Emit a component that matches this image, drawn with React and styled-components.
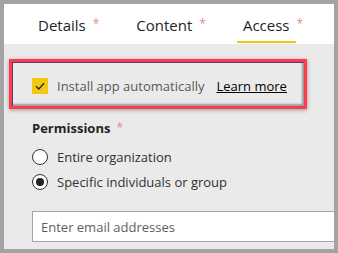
import React from "react";
import styled, { createGlobalStyle } from "styled-components";

const Global = createGlobalStyle`
  html, body { margin: 0; padding: 0; background: #a3a3a3; }
  * { box-sizing: border-box; }
`;

const Frame = styled.div`
  width: 338px;
  height: 253px;
  border: 4px solid #a3a3a3;
  background: #eaeaea;
  overflow: hidden;
  display: flex;
  flex-direction: column;
  font-family: "Open Sans", "Noto Sans", sans-serif;
  color: #323130;
  white-space: nowrap;
`;

const Header = styled.div`
  flex: none;
  height: 40px;
  background: #fff;
  display: flex;
  align-items: flex-end;
  gap: 31px;
  padding: 0 0 1px 28px;
`;

const Tab = styled.div`
  display: flex;
  align-items: center;
  height: 39px;
`;

const TabLabel = styled.span`
  height: 39px;
  display: flex;
  align-items: center;
  padding: 4px 6px 0;
  font-size: 15px;
  color: #252423;
  border-bottom: 2px solid ${(p) => (p.$active ? "#f2c811" : "transparent")};
`;

const Required = styled.span`
  color: #ee7f95;
  font-size: ${(p) => p.$size || 12}px;
  font-weight: 400;
  margin-left: ${(p) => p.$gap || 1}px;
  align-self: center;
  margin-top: ${(p) => p.$top || 0}px;
`;

const Body = styled.div`
  flex: 1;
  padding: 15px 0 0 5px;
  display: flex;
  flex-direction: column;
`;

const Highlight = styled.div`
  width: 298px;
  height: 50px;
  flex: none;
  border: 3px solid #fd3b4c;
  box-shadow: inset 1px 1px 0 #5a3d74, inset -2px -2px 2px rgba(0, 0, 0, 0.35),
    0 1px 4px rgba(0, 0, 0, 0.35);
  display: flex;
  align-items: center;
  padding: 3px 0 0 20px;
  gap: 9px;
  font-size: 13px;
`;

const CheckBox = styled.span`
  width: 16px;
  height: 16px;
  background: #f2c811;
  display: flex;
  align-items: center;
  justify-content: center;
  flex: none;
`;

const MutedText = styled.span`
  color: #5a5856;
`;

const Link = styled.a`
  margin-left: 3px;
  color: #000;
  text-decoration: underline;
`;

const Section = styled.div`
  padding-left: 23px;
  display: flex;
  flex-direction: column;
`;

const Label = styled.div`
  margin-top: 10px;
  font-size: 13px;
  font-weight: 700;
  color: #252423;
  display: flex;
  align-items: center;
`;

const RadioList = styled.div`
  margin-top: 12px;
  display: flex;
  flex-direction: column;
  gap: 9px;
`;

const RadioRow = styled.div`
  display: flex;
  align-items: center;
  gap: 9px;
  font-size: 13px;
  height: 16px;
`;

const Radio = styled.span`
  width: 16px;
  height: 16px;
  flex: none;
  border-radius: 50%;
  border: 1px solid #323130;
  background: #fff;
  display: flex;
  align-items: center;
  justify-content: center;
  &::after {
    content: "";
    width: 8px;
    height: 8px;
    border-radius: 50%;
    background: ${(p) => (p.$checked ? "#252423" : "transparent")};
  }
`;

const Input = styled.div`
  margin-top: 21px;
  width: 320px;
  height: 31px;
  flex: none;
  background: #fff;
  border: 1px solid #a6a6a6;
  display: flex;
  align-items: center;
  padding-left: 8px;
  font-size: 13px;
  color: #605e5c;
`;

export default function App() {
  return (
    <>
      <Global />
      <Frame>
        <Header>
          <Tab>
            <TabLabel>Details</TabLabel>
            <Required $top={-1}>*</Required>
          </Tab>
          <Tab>
            <TabLabel>Content</TabLabel>
            <Required $top={-1}>*</Required>
          </Tab>
          <Tab>
            <TabLabel $active>Access</TabLabel>
            <Required $top={-1}>*</Required>
          </Tab>
        </Header>
        <Body>
          <Highlight>
            <CheckBox>
              <svg width="10" height="8" viewBox="0 0 10 8">
                <path d="M1 4.2 L3.8 7 L9 1.2" fill="none" stroke="#2b2a29" strokeWidth="1.4" />
              </svg>
            </CheckBox>
            <MutedText>Install app automatically</MutedText>
            <Link>Learn more</Link>
          </Highlight>
          <Section>
            <Label>
              Permissions
              <Required $gap={6} $top={-2}>*</Required>
            </Label>
            <RadioList>
              <RadioRow>
                <Radio />
                Entire organization
              </RadioRow>
              <RadioRow>
                <Radio $checked />
                Specific individuals or group
              </RadioRow>
            </RadioList>
            <Input>Enter email addresses</Input>
          </Section>
        </Body>
      </Frame>
    </>
  );
}
